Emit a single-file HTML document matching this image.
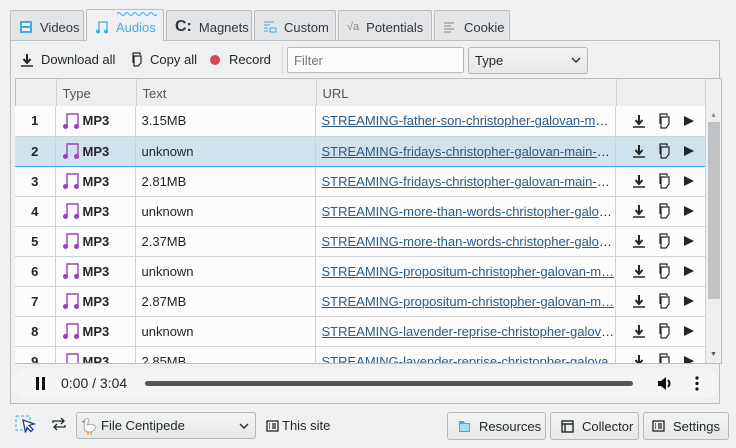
<!DOCTYPE html><html><head><meta charset="utf-8"><style>
*{box-sizing:border-box;margin:0;padding:0}
body{width:736px;height:448px;background:#eff0f1;font-family:"Liberation Sans","DejaVu Sans",sans-serif;font-size:13px;color:#232627;position:relative;overflow:hidden}
.a{position:absolute}
.tab{position:absolute;top:10px;height:30px;border:1px solid #bcbebf;border-bottom:none;background:#e3e5e7;border-radius:2px 2px 0 0;display:flex;align-items:center;padding-left:8px;padding-top:3px;gap:7px;color:#31363b}
.tab.act{background:#eff0f1;top:9px;height:32px;color:#3daee9}
.pane{position:absolute;left:10px;top:40px;width:710px;height:364px;border:1px solid #bcbebf;background:#eff0f1}
.btn{position:absolute;height:27px;border:1px solid #b6b8ba;border-radius:3px;background:linear-gradient(#f2f3f4,#e6e8e9);display:flex;align-items:center;gap:7px;padding-left:10px}
table{border-collapse:collapse;table-layout:fixed;position:absolute;left:16px;top:78px}
td,th{height:30px;border-right:1px solid #cfd1d2;border-bottom:1px solid #cfd1d2;white-space:nowrap;overflow:hidden;text-overflow:ellipsis;padding-left:6px;text-align:left;font-weight:normal}
th{background:#eceeef;height:29px;color:#555}
td.n{background:#e4e6e7;text-align:center;font-weight:bold;padding:0}
tr.r td{background:#fcfcfc}
tr.sel td{background:#d2e2ec;border-top:1px solid #3daee9;border-bottom:1px solid #3daee9}
tr.sel td.n{background:#d2e2ec}
u{color:#2e5a80}
.mp{display:flex;align-items:center;gap:3px;font-weight:bold}
.ic{display:flex;align-items:center;justify-content:space-between;padding:0 10px 0 10px}
</style></head><body>
<div class="pane"></div>
<div class="tab" style="left:10px;width:74px"><svg width="14" height="14"><rect x="1" y="1" width="12" height="12" fill="#3daee9"/><rect x="3" y="3" width="8" height="3" fill="#eff0f1"/><rect x="3" y="8" width="8" height="3" fill="#eff0f1"/></svg>Videos</div>
<div class="tab act" style="left:86px;width:78px"><svg width="14" height="14"><path d="M4 11V2h8v9" stroke="#3daee9" fill="none" stroke-width="1.3"/><circle cx="3" cy="11.5" r="2" fill="#3daee9"/><circle cx="11" cy="11.5" r="2" fill="#3daee9"/></svg>Audios<svg class="a" style="left:30px;top:1px" width="40" height="5"><path d="M0 3q2-3 4 0t4 0 4 0 4 0 4 0 4 0 4 0 4 0 4 0 4 0" stroke="#3daee9" fill="none"/></svg></div>
<div class="tab" style="left:166px;width:86px"><b style="font-size:16px">C:</b>Magnets</div>
<div class="tab" style="left:254px;width:82px"><svg width="14" height="14" stroke="#3daee9"><path d="M1 2h10M1 5h6M1 8h4M1 11h4M7 8h6v4H7z" fill="none"/></svg>Custom</div>
<div class="tab" style="left:338px;width:94px"><span style="color:#888;font-size:11px">√a</span>Potentials</div>
<div class="tab" style="left:434px;width:76px"><svg width="14" height="14" stroke="#888"><path d="M1 3h10M1 6h7M1 9h10M1 12h7"/></svg>Cookie</div>

<div class="a" style="left:20px;top:52px;display:flex;align-items:center;gap:7px"><svg width="14" height="14"><path d="M7 1v8M3.5 6L7 10l3.5-4" stroke="#232627" stroke-width="2" fill="none"/><path d="M1 13h12" stroke="#232627" stroke-width="1.5"/></svg>Download all</div>
<div class="a" style="left:130px;top:52px;display:flex;align-items:center;gap:6px"><svg width="14" height="15" fill="none" stroke="#232627" stroke-width="1.2"><path d="M3 11V1h7v2M4 4h7v7l-3 3H4z"/></svg>Copy all</div>
<div class="a" style="left:210px;top:52px;display:flex;align-items:center;gap:9px"><span style="width:10px;height:10px;border-radius:5px;background:#da4453;display:inline-block"></span>Record</div>
<div class="a" style="left:282px;top:47px;width:1px;height:26px;background:#cfd1d2"></div>
<div class="a" style="left:287px;top:47px;width:177px;height:26px;border:1px solid #b6b8ba;background:#fcfcfc;border-radius:2px;padding:5px 0 0 6px;color:#777">Filter</div>
<div class="btn" style="left:468px;top:47px;width:120px;padding-left:6px">Type<svg class="a" style="left:102px;top:9px" width="10" height="7"><path d="M1 1l4 4 4-4" stroke="#232627" fill="none" stroke-width="1.4"/></svg></div>

<div class="a" style="left:15px;top:78px;width:707px;height:286px;border:1px solid #bcbebf;background:#fcfcfc;overflow:hidden">
<table style="left:0;top:0;width:690px">
<colgroup><col style="width:40px"><col style="width:80px"><col style="width:180px"><col style="width:300px"><col style="width:90px"></colgroup>
<tr><th></th><th>Type</th><th>Text</th><th>URL</th><th></th></tr>
</table>
<div class="a" style="left:689px;top:0;width:17px;height:286px;background:#eceeef;border-left:1px solid #cfd1d2"></div>
<div class="a" style="left:692px;top:43px;width:12px;height:177px;background:#c0c2c3"></div>
<div class="a" style="left:694px;top:33px;font-size:7px;color:#888">▲</div>
<div class="a" style="left:694px;top:272px;font-size:7px;color:#555">▼</div>
</div>
<div class="a" style="left:15px;top:106px;width:690px;height:257px;overflow:hidden">
<table style="left:0;top:0;width:690px" id="t">
<colgroup><col style="width:40px"><col style="width:80px"><col style="width:180px"><col style="width:300px"><col style="width:90px"></colgroup>
</table></div>
<script>
var d=[["3.15MB","father-son-christopher-galovan-mai…"],["unknown","fridays-christopher-galovan-main-v…"],["2.81MB","fridays-christopher-galovan-main-vi…"],["unknown","more-than-words-christopher-galov…"],["2.37MB","more-than-words-christopher-galov…"],["unknown","propositum-christopher-galovan-m…"],["2.87MB","propositum-christopher-galovan-m…"],["unknown","lavender-reprise-christopher-galova…"],["2.85MB","lavender-reprise-christopher-galova"]];
var note='<svg width="18" height="18"><path d="M5 14V2h11v12" stroke="#9b3fc0" fill="none" stroke-width="1.4"/><circle cx="3.5" cy="14.5" r="2.5" fill="#9b3fc0"/><circle cx="14.5" cy="14.5" r="2.5" fill="#9b3fc0"/></svg>';
var ic='<svg width="14" height="14"><path d="M7 1v8M3.5 6L7 10l3.5-4" stroke="#232627" stroke-width="2" fill="none"/><path d="M1 13h12" stroke="#232627" stroke-width="1.5"/></svg><svg width="14" height="16" fill="none" stroke="#232627" stroke-width="1.2"><path d="M3 11V1h7v2M4 4h8v7l-3 4H4z"/></svg><svg width="12" height="12"><path d="M1 1l10 5-10 5z" fill="#232627"/></svg>';
var h='';d.forEach(function(r,i){h+='<tr class="'+(i==1?'sel':'r')+'"><td class="n">'+(i+1)+'</td><td><span class="mp">'+note+'MP3</span></td><td>'+r[0]+'</td><td><u>STREAMING-'+r[1]+'</u></td><td><div class="ic">'+ic+'</div></td></tr>'});
document.getElementById('t').innerHTML+=h;
</script>

<div class="a" style="left:12px;top:368px;width:706px;height:31px;border-radius:14px;background:#f4f5f5;display:flex;align-items:center">
<svg class="a" style="left:23px;top:9px" width="12" height="13"><rect x="1" y="0" width="3" height="13" fill="#111"/><rect x="7" y="0" width="3" height="13" fill="#111"/></svg>
<span class="a" style="left:49px;top:7px;font-size:14px">0:00 / 3:04</span>
<div class="a" style="left:133px;top:13px;width:488px;height:5px;border-radius:3px;background:#555"></div>
<svg class="a" style="left:645px;top:8px" width="16" height="15"><path d="M1 5h3l5-4v13l-5-4H1z" fill="#111"/><path d="M11 4q3 3.5 0 7" stroke="#111" stroke-width="2" fill="none"/></svg>
<svg class="a" style="left:683px;top:8px" width="4" height="15" fill="#111"><circle cx="2" cy="2" r="1.6"/><circle cx="2" cy="7.5" r="1.6"/><circle cx="2" cy="13" r="1.6"/></svg>
</div>

<svg class="a" style="left:15px;top:414px" width="22" height="20"><rect x="1" y="2" width="14" height="14" fill="none" stroke="#3daee9" stroke-dasharray="3 2"/><path d="M8 6l11 4-5 1.5 4 4-2 2-4-4-1.5 5z" fill="#fff" stroke="#1d3f8f" stroke-width="1.3"/></svg>
<svg class="a" style="left:52px;top:417px" width="14" height="14" fill="none" stroke="#232627" stroke-width="1.3"><path d="M1 6V4h11M9 1l3 3-3 3M13 8v2H2M5 7l-3 3 3 3"/></svg>
<div class="btn" style="left:76px;top:412px;width:180px;padding-left:4px;gap:2px"><svg width="18" height="20"><path d="M5 3q3-2 3 2l-2 4q6-2 9 2-2 5-7 5-5 0-5-6l1-4q-2-1-1-2z" fill="#fff" stroke="#aaa"/><path d="M4 5l-3 1" stroke="#e67e22" stroke-width="1.5"/><path d="M7 16v3M10 16v3" stroke="#e67e22"/></svg>File Centipede<svg class="a" style="left:162px;top:10px" width="10" height="7"><path d="M1 1l4 4 4-4" stroke="#232627" fill="none" stroke-width="1.4"/></svg></div>
<div class="a" style="left:266px;top:418px;display:flex;align-items:center;gap:3px"><svg width="13" height="12" fill="none" stroke="#232627" stroke-width="1.3"><rect x="1" y="1" width="11" height="10"/><path d="M3 4h1M3 6h1M3 8h1M6 4h4M6 6h4M6 8h4"/></svg>This site</div>
<div class="btn" style="left:447px;top:412px;width:99px;height:28px;padding-left:10px;gap:8px"><svg width="13" height="13"><path d="M1 1h5l1 2h5v9H1z" fill="#3daee9"/><rect x="2" y="4" width="9" height="7" fill="#a8dbf5"/></svg>Resources</div>
<div class="btn" style="left:550px;top:412px;width:89px;height:28px;gap:8px"><svg width="13" height="13" fill="none" stroke="#232627" stroke-width="1.4"><rect x="1" y="1" width="11" height="11"/><path d="M1 4h11M4 4v8"/></svg>Collector</div>
<div class="btn" style="left:643px;top:412px;width:86px;height:28px;padding-left:8px;gap:8px"><svg width="13" height="12" fill="none" stroke="#232627" stroke-width="1.3"><rect x="1" y="1" width="11" height="10"/><path d="M3 4h1M3 6h1M3 8h1M6 4h4M6 6h4M6 8h4"/></svg>Settings</div>
</body></html>
